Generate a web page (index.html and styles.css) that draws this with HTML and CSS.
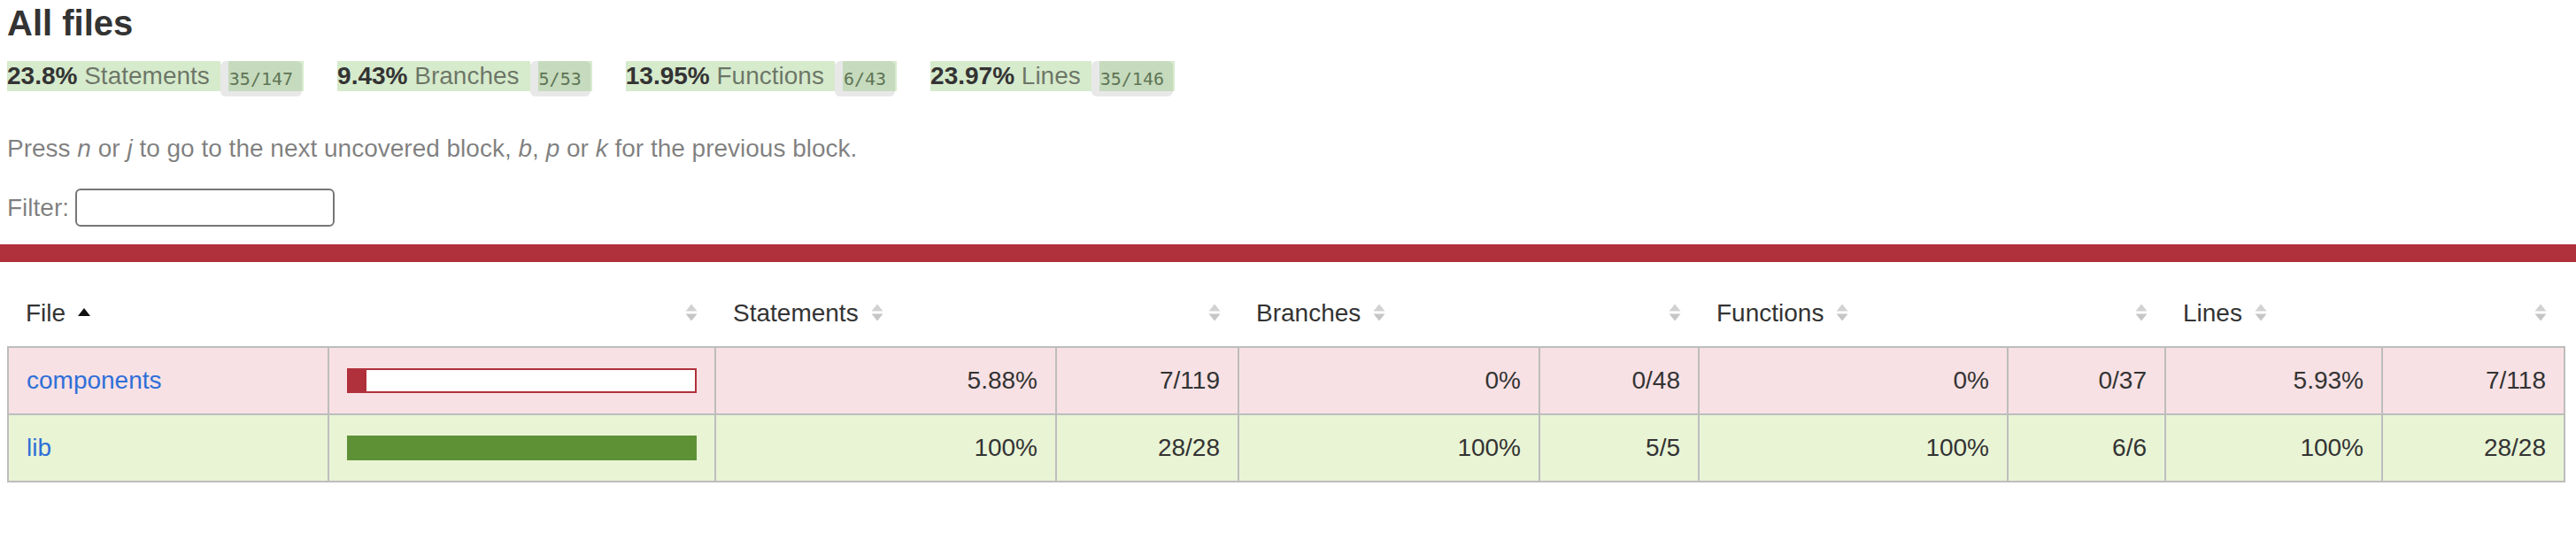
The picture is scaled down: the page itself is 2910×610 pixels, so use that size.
FILE: index.html
```
<!DOCTYPE html>
<html lang="en">
<head>
<meta charset="utf-8">
<title>Code coverage report for All files</title>
<link rel="stylesheet" href="styles.css">
</head>
<body>
<div class="header">
  <h1 class="title">All files</h1>
  <div class="stats">
    <div class="stat"><span class="stat-label"><span class="strong">23.8%</span> <span class="quiet">Statements</span></span><span class="fraction">35/147</span></div>
    <div class="stat"><span class="stat-label"><span class="strong">9.43%</span> <span class="quiet">Branches</span></span><span class="fraction">5/53</span></div>
    <div class="stat"><span class="stat-label"><span class="strong">13.95%</span> <span class="quiet">Functions</span></span><span class="fraction">6/43</span></div>
    <div class="stat"><span class="stat-label"><span class="strong">23.97%</span> <span class="quiet">Lines</span></span><span class="fraction">35/146</span></div>
  </div>
  <p class="hint">Press <em>n</em> or <em>j</em> to go to the next uncovered block, <em>b</em>, <em>p</em> or <em>k</em> for the previous block.</p>
  <div class="filter"><span>Filter:</span><input type="search" class="filter-input" aria-label="Filter"></div>
</div>
<div class="status-line"></div>
<div class="summary">
<table class="coverage">
  <colgroup>
    <col class="w-file"><col class="w-pic"><col class="w-spct"><col class="w-sabs"><col class="w-bpct"><col class="w-babs"><col class="w-fpct"><col class="w-fabs"><col class="w-lpct"><col class="w-labs">
  </colgroup>
  <thead>
    <tr>
      <th class="th-left">File<svg class="sorter" width="14" height="20" viewBox="0 0 14 20"><polygon points="7,5 14,14 0,14" fill="#111"/></svg></th>
      <th class="th-right"><svg class="sorter" width="14" height="20" viewBox="0 0 14 20"><polygon points="7,0.5 13.5,8.5 0.5,8.5" fill="#d2d2d2"/><polygon points="0.5,11.5 13.5,11.5 7,19.5" fill="#c6c6c6"/></svg></th>
      <th class="th-left">Statements<svg class="sorter" width="14" height="20" viewBox="0 0 14 20"><polygon points="7,0.5 13.5,8.5 0.5,8.5" fill="#d2d2d2"/><polygon points="0.5,11.5 13.5,11.5 7,19.5" fill="#c6c6c6"/></svg></th>
      <th class="th-right"><svg class="sorter" width="14" height="20" viewBox="0 0 14 20"><polygon points="7,0.5 13.5,8.5 0.5,8.5" fill="#d2d2d2"/><polygon points="0.5,11.5 13.5,11.5 7,19.5" fill="#c6c6c6"/></svg></th>
      <th class="th-left">Branches<svg class="sorter" width="14" height="20" viewBox="0 0 14 20"><polygon points="7,0.5 13.5,8.5 0.5,8.5" fill="#d2d2d2"/><polygon points="0.5,11.5 13.5,11.5 7,19.5" fill="#c6c6c6"/></svg></th>
      <th class="th-right"><svg class="sorter" width="14" height="20" viewBox="0 0 14 20"><polygon points="7,0.5 13.5,8.5 0.5,8.5" fill="#d2d2d2"/><polygon points="0.5,11.5 13.5,11.5 7,19.5" fill="#c6c6c6"/></svg></th>
      <th class="th-left">Functions<svg class="sorter" width="14" height="20" viewBox="0 0 14 20"><polygon points="7,0.5 13.5,8.5 0.5,8.5" fill="#d2d2d2"/><polygon points="0.5,11.5 13.5,11.5 7,19.5" fill="#c6c6c6"/></svg></th>
      <th class="th-right"><svg class="sorter" width="14" height="20" viewBox="0 0 14 20"><polygon points="7,0.5 13.5,8.5 0.5,8.5" fill="#d2d2d2"/><polygon points="0.5,11.5 13.5,11.5 7,19.5" fill="#c6c6c6"/></svg></th>
      <th class="th-left">Lines<svg class="sorter" width="14" height="20" viewBox="0 0 14 20"><polygon points="7,0.5 13.5,8.5 0.5,8.5" fill="#d2d2d2"/><polygon points="0.5,11.5 13.5,11.5 7,19.5" fill="#c6c6c6"/></svg></th>
      <th class="th-right"><svg class="sorter" width="14" height="20" viewBox="0 0 14 20"><polygon points="7,0.5 13.5,8.5 0.5,8.5" fill="#d2d2d2"/><polygon points="0.5,11.5 13.5,11.5 7,19.5" fill="#c6c6c6"/></svg></th>
    </tr>
  </thead>
  <tbody>
    <tr class="low">
      <td class="file"><a href="#components">components</a></td>
      <td class="pic"><div class="chart"><div class="cover-fill" style="width: 5%"></div><div class="cover-empty" style="width: 95%"></div></div></td>
      <td class="num">5.88%</td>
      <td class="num">7/119</td>
      <td class="num">0%</td>
      <td class="num">0/48</td>
      <td class="num">0%</td>
      <td class="num">0/37</td>
      <td class="num">5.93%</td>
      <td class="num">7/118</td>
    </tr>
    <tr class="high">
      <td class="file"><a href="#lib">lib</a></td>
      <td class="pic"><div class="chart"><div class="cover-fill" style="width: 100%"></div></div></td>
      <td class="num">100%</td>
      <td class="num">28/28</td>
      <td class="num">100%</td>
      <td class="num">5/5</td>
      <td class="num">100%</td>
      <td class="num">6/6</td>
      <td class="num">100%</td>
      <td class="num">28/28</td>
    </tr>
  </tbody>
</table>
</div>
</body>
</html>
```
FILE: styles.css
```
* { box-sizing: border-box; }

body {
  margin: 0;
  font-family: "Liberation Sans", Arial, sans-serif;
  font-size: 28px;
  color: #333;
  background: #fff;
}

.header { padding: 3px 13px 20px 8px; }

.title {
  margin: 0;
  font-size: 40px;
  line-height: 46px;
  font-weight: bold;
}

.stats {
  display: flex;
  align-items: flex-start;
  padding: 20px 0;
}

.stat {
  display: flex;
  align-items: flex-start;
  margin-right: 40px;
}

.stat-label {
  line-height: 34px;
  padding-right: 12px;
  background: #d6eacc;
  white-space: nowrap;
}

.strong { font-weight: bold; }

.quiet { color: rgba(0, 0, 0, 0.5); }

.fraction {
  position: relative;
  height: 40px;
  padding: 1px 10px 0;
  line-height: 38px;
  font-family: "DejaVu Sans Mono", "Liberation Mono", monospace;
  font-size: 20px;
  color: #555;
  background: #e8e8e8;
  border-radius: 6px;
}

.fraction::after {
  content: "";
  position: absolute;
  left: 9px;
  right: -2px;
  top: 0;
  height: 34px;
  background: rgba(120, 190, 90, 0.3);
}

.hint {
  margin: 23px 0 0;
  line-height: 32px;
  color: rgba(0, 0, 0, 0.5);
}

.filter {
  display: flex;
  align-items: center;
  gap: 7px;
  margin-top: 29px;
  color: rgba(0, 0, 0, 0.5);
}

.filter-input {
  -webkit-appearance: none;
  appearance: none;
  width: 293px;
  height: 43px;
  margin: 0;
  padding: 0 8px;
  border: 2px solid #767676;
  border-radius: 6px;
  background: #fff;
  font: inherit;
}

.status-line {
  height: 20px;
  background: #b0303c;
}

.summary { padding: 21px 13px 20px 8px; }

.coverage {
  width: 100%;
  border-collapse: collapse;
  table-layout: fixed;
}

.w-file { width: 362px; }
.w-pic { width: 437px; }
.w-spct { width: 385px; }
.w-sabs { width: 206px; }
.w-bpct { width: 340px; }
.w-babs { width: 180px; }
.w-fpct { width: 349px; }
.w-fabs { width: 178px; }
.w-lpct { width: 245px; }
.w-labs { width: 206px; }

.coverage tr { border-bottom: 2px solid #bdbdbd; }

.coverage tbody { border: 2px solid #bdbdbd; }

.coverage th {
  padding: 20px;
  line-height: 34px;
  font-weight: normal;
  white-space: nowrap;
}

.th-left { text-align: left; }
.th-right { text-align: right; }

.sorter {
  display: inline-block;
  margin-left: 14px;
  vertical-align: baseline;
}

.th-right .sorter { margin-left: 0; }

.coverage td {
  padding: 20px;
  line-height: 34px;
  border-right: 2px solid #bdbdbd;
  white-space: nowrap;
}

.coverage td:last-child { border-right: none; }

.coverage td.num { text-align: right; }

.coverage a {
  color: #2f6fd8;
  text-decoration: none;
}

.low td { background: #f8e1e4; }
.high td { background: #e9f4d5; }

.chart {
  display: flex;
  height: 28px;
  border: 2px solid;
}

.low .chart { border-color: #b0303c; }
.high .chart { border-color: #5e9136; }

.low .cover-fill { background: #b0303c; }
.high .cover-fill { background: #5e9136; }

.cover-empty { background: #fff; }
```
